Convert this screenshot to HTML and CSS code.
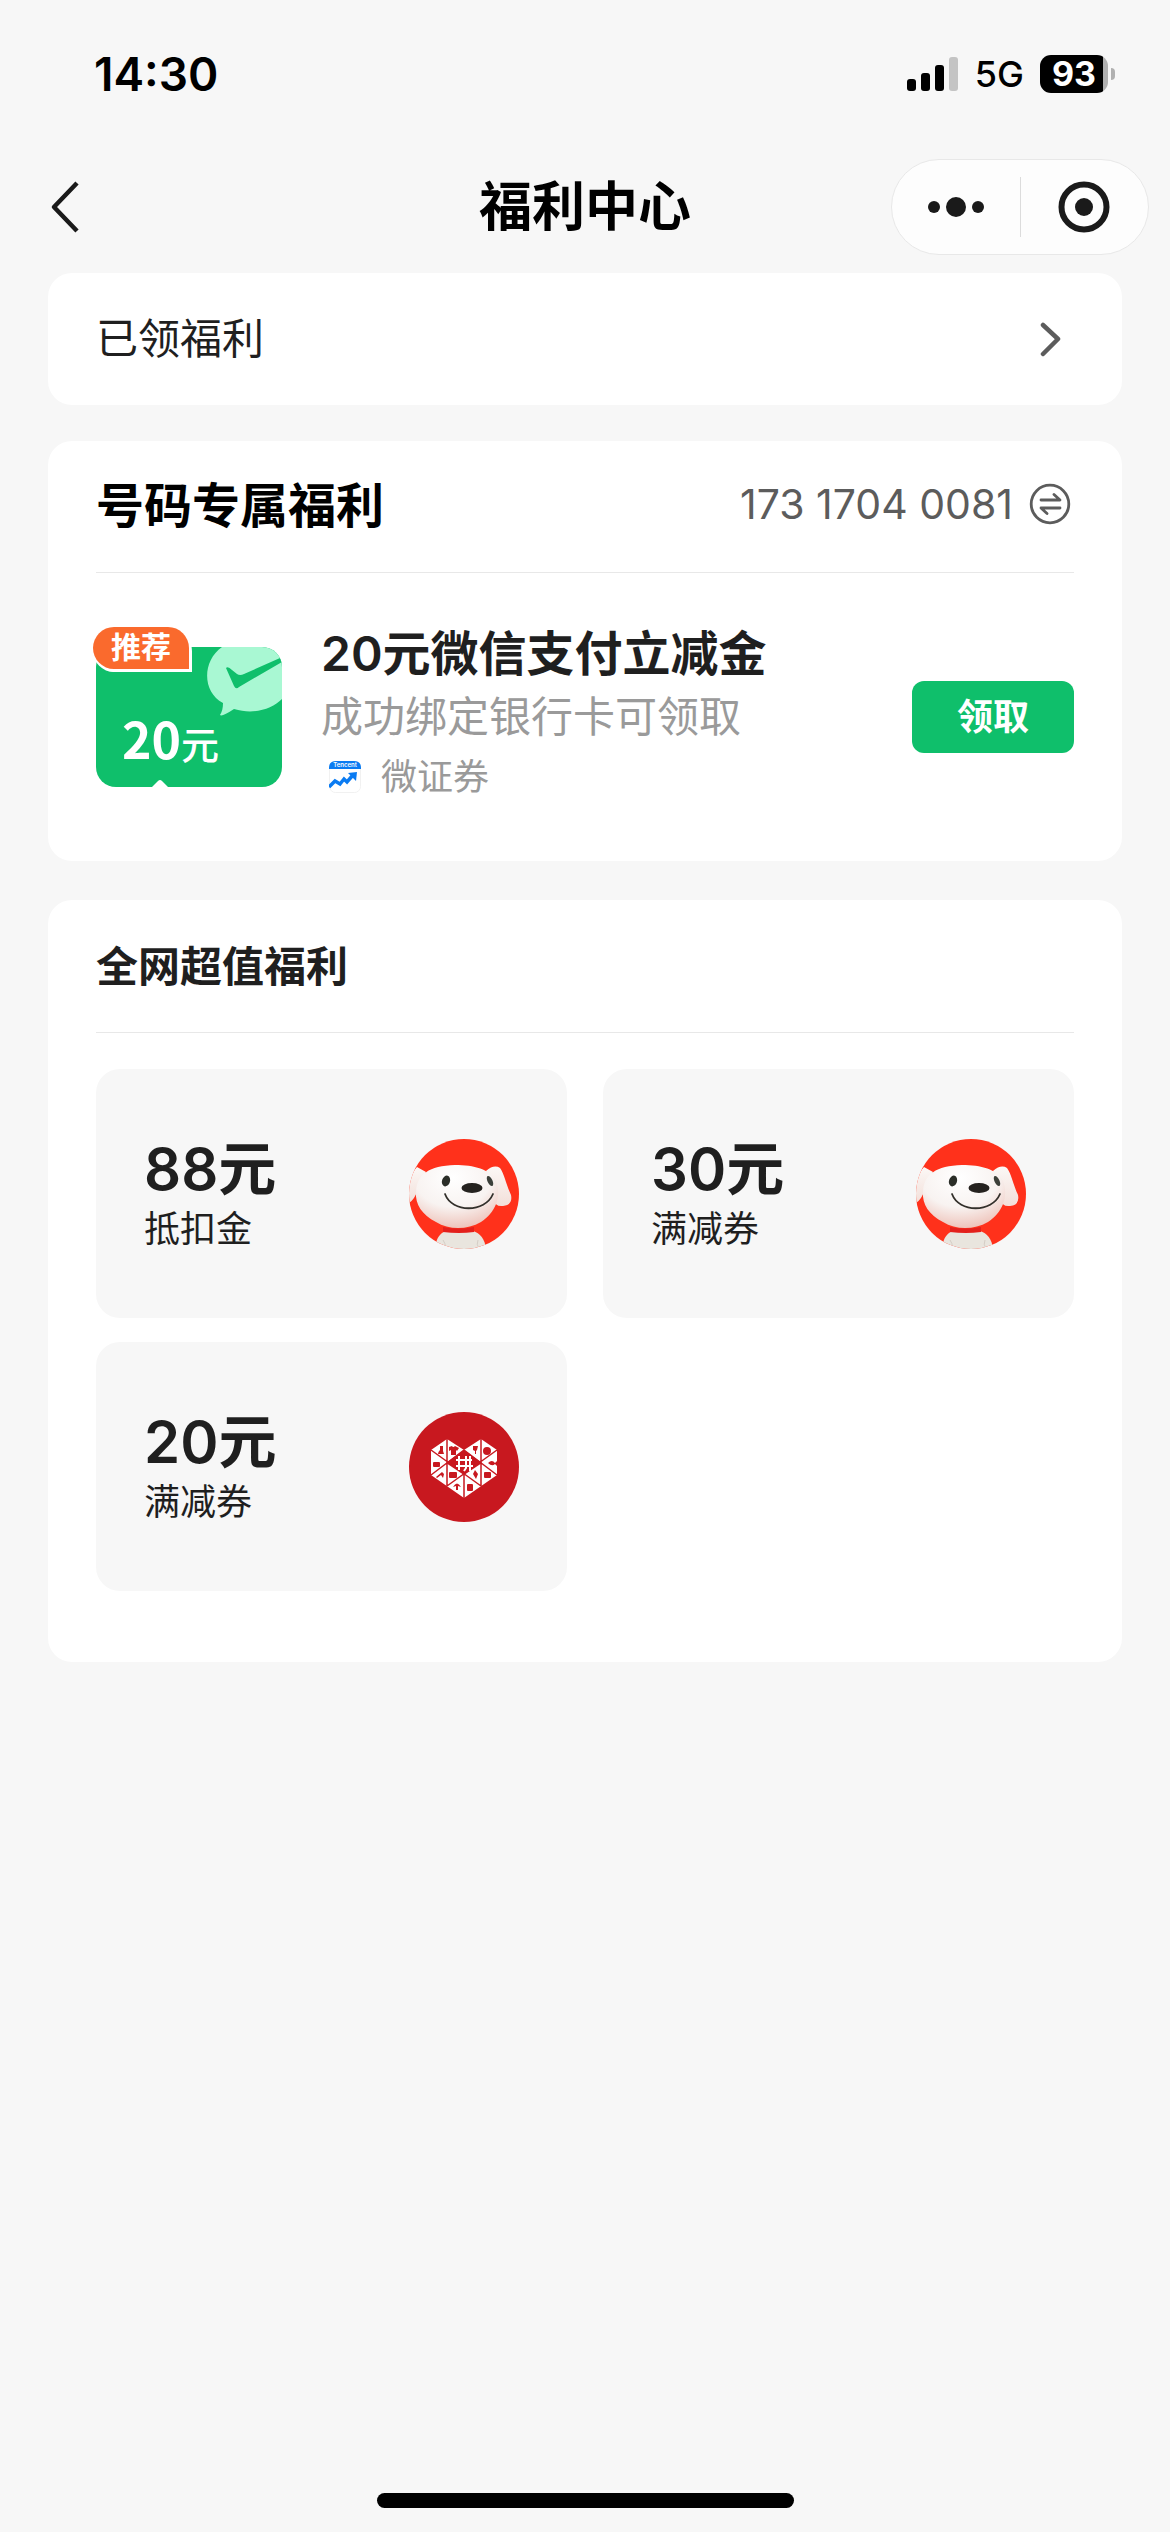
FILE: index.html
```html
<!DOCTYPE html>
<html lang="zh-CN">
<head>
<meta charset="utf-8">
<meta name="viewport" content="width=device-width, initial-scale=1">
<title>福利中心</title>
<link rel="stylesheet" href="styles.css">
</head>
<body>
<svg class="defs" width="0" height="0" aria-hidden="true">
  <defs>
    <radialGradient id="face" cx="45%" cy="20%" r="85%">
      <stop offset="0" stop-color="#ffffff"/>
      <stop offset="0.55" stop-color="#f8f3f1"/>
      <stop offset="1" stop-color="#edbdb3"/>
    </radialGradient>
    <linearGradient id="ear" x1="0" y1="0" x2="0" y2="1">
      <stop offset="0" stop-color="#fbf8f6"/>
      <stop offset="1" stop-color="#f3dfd9"/>
    </linearGradient>
    <clipPath id="disc"><circle cx="55" cy="55" r="55"/></clipPath>
    <symbol id="dog" viewBox="0 0 110 110">
      <g clip-path="url(#disc)">
        <rect width="110" height="110" fill="#ff311b"/>
        <path d="M26 110C27 98 32 93 38 92H64C71 94 76 100 77 110Z" fill="#e9e5de"/>
        <path d="M17 33L8 28Q2 34 0 45V64Q6 60 9 50Z" fill="url(#ear)"/>
        <path d="M77 32Q85 25 91 29C95 34 97 45 102 56Q104 66 94 67Q86 68 84 60Z" fill="url(#ear)"/>
        <path d="M7 53C8 35 20 27 46 26C65 26 81 30 87 42C93 58 86 74 72 83C58 91 40 91 27 83C13 76 6 65 7 53Z" fill="url(#face)"/>
        <path d="M34 88Q49 91 65 88V93Q50 95 34 93Z" fill="#e3201c"/>
        <ellipse cx="37" cy="42" rx="4" ry="5.500" transform="rotate(18 37 42)" fill="#2b2e28"/>
        <ellipse cx="81" cy="42" rx="2.500" ry="5.500" transform="rotate(-25 81 42)" fill="#3c403a"/>
        <ellipse cx="63" cy="49" rx="10.500" ry="5" fill="#25221f"/>
        <path d="M36 55C43 74 76 74 84 55" fill="none" stroke="#33302b" stroke-width="1.800" stroke-linecap="round"/>
        <path d="M34 101Q37 104 36 110M69 101Q67 105 70 110" fill="none" stroke="#d4cdc5"/>
      </g>
    </symbol>
  </defs>
</svg>

<div class="page">
  <div class="status">
    <span class="time">14:30</span>
    <div class="status-right">
      <svg class="signal" width="52" height="34" viewBox="0 0 52 34" aria-hidden="true">
        <rect x="0" y="22" width="9" height="12" rx="3"/>
        <rect x="14" y="16" width="9" height="18" rx="3"/>
        <rect x="28" y="8" width="9" height="26" rx="3"/>
        <rect x="42" y="0" width="9" height="34" rx="3" fill="#c4c4c4"/>
      </svg>
      <span class="network">5G</span>
      <div class="battery"><span class="level">93</span></div>
    </div>
  </div>

  <header class="navbar">
    <button class="back" type="button" aria-label="返回">
      <svg width="30" height="54" viewBox="0 0 30 54"><path d="M27 3L4 27L27 51" fill="none" stroke="#1a1a1a" stroke-width="4.500" stroke-linejoin="round"/></svg>
    </button>
    <h1 class="title">福利中心</h1>
    <div class="capsule">
      <button class="capsule-btn" type="button" aria-label="更多">
        <svg width="60" height="24" viewBox="0 0 60 24" fill="#1a1a1a"><circle cx="8" cy="12" r="6"/><circle cx="30" cy="12" r="10"/><circle cx="52" cy="12" r="6"/></svg>
      </button>
      <span class="capsule-line"></span>
      <button class="capsule-btn" type="button" aria-label="关闭">
        <svg width="52" height="52" viewBox="0 0 52 52"><circle cx="26" cy="26" r="22.500" fill="none" stroke="#1a1a1a" stroke-width="6"/><circle cx="26" cy="26" r="9" fill="#1a1a1a"/></svg>
      </button>
    </div>
  </header>

  <main class="content">
    <a class="card received" href="#received">
      <span>已领福利</span>
      <svg width="24" height="36" viewBox="0 0 24 36" aria-hidden="true"><path d="M5 4L20 18L5 33" fill="none" stroke="#5c5c5c" stroke-width="4.500" stroke-linecap="round" stroke-linejoin="round"/></svg>
    </a>

    <section class="card exclusive">
      <div class="card-head">
        <h2 class="heading-lg">号码专属福利</h2>
        <button class="phone" type="button">
          <span>173 1704 0081</span>
          <svg width="42" height="42" viewBox="0 0 42 42" fill="none" stroke="#5c5c5c" stroke-width="2.800" stroke-linecap="round" stroke-linejoin="round" aria-hidden="true"><circle cx="21" cy="21" r="18.800"/><path d="M12 17H31L25 11.500M31 25H12L18 30.500"/></svg>
        </button>
      </div>
      <div class="offer">
        <div class="coupon">
          <svg width="186" height="140" viewBox="0 0 186 140" aria-hidden="true">
            <defs><clipPath id="ticket"><rect width="186" height="140" rx="20"/></clipPath></defs>
            <g clip-path="url(#ticket)">
              <rect width="186" height="140" fill="#0fbf6b"/>
              <path d="M126 0C106 14 106 45 127 56C127 61 126 65 124 68Q126 70 138 62C158 68 176 62 186 52V0Z" fill="#a9f8d3"/>
              <path d="M130 21Q132 19 136 23L141 27Q144 29 148 27L184 11L186 15L143 40Q140 43 138 39Z" fill="#0fbf6b"/>
              <path d="M56 140L62 134Q64 132 66 134L72 140Z" fill="#fff"/>
            </g>
          </svg>
          <span class="coupon-value">20<span class="coupon-unit">元</span></span>
          <span class="tag">推荐</span>
        </div>
        <div class="offer-text">
          <h3 class="offer-title">20元微信支付立减金</h3>
          <p class="offer-desc">成功绑定银行卡可领取</p>
          <p class="brand">
            <svg width="32" height="32" viewBox="0 0 32 32" aria-hidden="true">
              <rect x="0.500" y="0.500" width="31" height="31" rx="6" fill="#fff" stroke="#f1f1f1"/>
              <path d="M0 8V7Q0 0 7 0H25Q32 0 32 7V8Z" fill="#0a7bf2"/>
              <text class="brand-name" x="16" y="6" text-anchor="middle">Tencent</text>
              <path d="M0 26L6 20L11 23L15 18L18 21L24 14" fill="none" stroke="#0a7bf2" stroke-width="3.500"/>
              <path d="M19 12L28 11L27 20Z" fill="#0a7bf2"/>
            </svg>
            <span>微证券</span>
          </p>
        </div>
        <button class="claim" type="button">领取</button>
      </div>
    </section>

    <section class="card deals">
      <div class="card-head">
        <h2 class="heading-md">全网超值福利</h2>
      </div>
      <div class="tiles">
        <a class="tile" href="#deal-1">
          <span class="tile-text"><strong class="amount">88元</strong><span class="kind">抵扣金</span></span>
          <svg width="110" height="110" aria-hidden="true"><use href="#dog"/></svg>
        </a>
        <a class="tile" href="#deal-2">
          <span class="tile-text"><strong class="amount">30元</strong><span class="kind">满减券</span></span>
          <svg width="110" height="110" aria-hidden="true"><use href="#dog"/></svg>
        </a>
        <a class="tile" href="#deal-3">
          <span class="tile-text"><strong class="amount">20元</strong><span class="kind">满减券</span></span>
          <svg width="110" height="110" viewBox="0 0 110 110" aria-hidden="true">
            <circle cx="55" cy="55" r="55" fill="#c8181f"/>
            <path d="M22 38L38 27L55 38L72 27L88 38V63L55 86L22 63Z" fill="#fff"/>
            <path d="M38 27V74M72 27V74M55 63V86M22 38L72 74M88 38L38 74M22 63L55 38M88 63L55 38" fill="none" stroke="#c8181f" stroke-width="1.500"/>
            <path d="M55 38L73 51L55 63L37 51Z" fill="#c8181f"/>
            <g fill="#c8181f">
              <path d="M31 34H34V39L35 42H29Q29 40 31 38Z"/>
              <path d="M40 35L43 34Q44 36 46 34L50 36L48 39L47 38V43H42V38L40 39Z"/>
              <rect x="24" y="50" width="7" height="5" rx="1"/>
              <path d="M27 65L33 60L35 62L34 66L32 63L28 66Z"/>
              <rect x="40" y="60" width="8" height="6" rx="1"/>
              <path d="M44 75Q48 68 52 75L49 74V78H47V74Z"/>
              <rect x="58" y="72" width="6" height="7" rx="1"/>
              <path d="M64 34H69L68 38L67 39V42H66V39L64 38Z"/>
              <circle cx="78" cy="39" r="4"/>
              <path d="M79 51Q83 47 86 51L88 49V54L86 52Q83 55 79 51Z"/>
              <path d="M66 58L69 62L67 67L64 62Z"/>
              <rect x="75" y="60" width="7" height="6" rx="1"/>
            </g>
            <path d="M50 44V58M57 44V56L55 59M61 44V59M47 48H63M47 54H64" fill="none" stroke="#fff" stroke-width="2"/>
          </svg>
        </a>
      </div>
    </section>
  </main>
  <div class="home-indicator"></div>
</div>
</body>
</html>
```
FILE: styles.css
```css
* {
  box-sizing: border-box;
}

body {
  margin: 0;
  background: #f7f7f7;
  color: #1f1f1f;
  font-family: Inter, "Noto Sans CJK SC", sans-serif;
}

h1, h2, h3, p {
  margin: 0;
}

button {
  margin: 0;
  padding: 0;
  border: 0;
  background: none;
  color: inherit;
  font: inherit;
}

a {
  color: inherit;
  text-decoration: none;
}

svg {
  display: block;
  flex: none;
}

.defs {
  position: absolute;
}

.page {
  display: flex;
  flex-direction: column;
  min-height: 100vh;
}

.status {
  display: flex;
  align-items: center;
  justify-content: space-between;
  height: 148px;
  padding: 0 62px 0 94px;
  color: #000;
}

.time {
  font-size: 46px;
  font-weight: 600;
}

.status-right {
  display: flex;
  align-items: center;
  gap: 16px;
}

.network {
  font-size: 36px;
  font-weight: 500;
}

.battery {
  position: relative;
  display: flex;
  align-items: center;
  justify-content: center;
  width: 68px;
  height: 38px;
  border-radius: 11px;
  background: linear-gradient(to right, #000 63px, #b0b0b0 63px);
}

.battery::after {
  content: "";
  position: absolute;
  left: 71px;
  top: 13px;
  width: 4px;
  height: 12px;
  border-radius: 0 4px 4px 0;
  background: #b0b0b0;
}

.level {
  color: #fff;
  font-size: 34px;
  font-weight: 700;
  line-height: 38px;
}

.navbar {
  display: grid;
  grid-template-columns: 1fr auto 1fr;
  align-items: center;
  height: 118px;
  padding: 0 21px;
}

.title {
  color: #000;
  font-size: 53px;
  font-weight: 600;
  line-height: 72px;
}

.back {
  justify-self: start;
  padding-left: 29px;
}

.capsule {
  display: flex;
  align-items: center;
  justify-self: end;
  width: 258px;
  height: 96px;
  border: 1px solid #e8e8e8;
  border-radius: 48px;
  background: #fdfdfd;
}

.capsule-btn {
  display: flex;
  flex: 1;
  align-items: center;
  justify-content: center;
}

.capsule-line {
  width: 1px;
  height: 60px;
  background: #dcdcdc;
}

.content {
  display: flex;
  flex: 1;
  flex-direction: column;
  gap: 36px;
  padding: 7px 48px 0;
}

.card {
  padding: 0 48px;
  border-radius: 24px;
  background: #fff;
}

.received {
  display: flex;
  align-items: center;
  justify-content: space-between;
  padding-right: 60px;
  font-size: 42px;
  line-height: 132px;
}

.card-head {
  display: flex;
  align-items: center;
  justify-content: space-between;
  height: 132px;
  padding-bottom: 5px;
  border-bottom: 1px solid #e8e8e8;
}

.heading-lg {
  padding-bottom: 4px;
  color: #000;
  font-size: 48px;
  font-weight: 600;
}

.heading-md {
  font-size: 42px;
  font-weight: 600;
}

.phone {
  display: flex;
  align-items: center;
  gap: 16px;
  padding-right: 3px;
  color: #5c5c5c;
  font-size: 41px;
}

.offer {
  display: flex;
  align-items: center;
  height: 288px;
}

.coupon {
  position: relative;
  width: 186px;
  margin-right: 39px;
}

.coupon-value {
  position: absolute;
  left: 26px;
  bottom: 16px;
  color: #fff;
  font-family: "Noto Sans CJK SC", sans-serif;
  font-size: 50px;
  font-weight: 600;
  line-height: 56px;
}

.coupon-unit {
  font-size: 38px;
  font-weight: 500;
}

.tag {
  position: absolute;
  left: -3px;
  top: -20px;
  width: 96px;
  border-radius: 21px 21px 0 21px;
  background: #fa6a2d;
  box-shadow: 0 3px 0 #fff, 3px 3px 0 #fff;
  color: #fff;
  font-size: 30px;
  font-weight: 600;
  line-height: 40px;
  padding-bottom: 2px;
  text-align: center;
}

.offer-text {
  flex: 1;
  padding-bottom: 6px;
}

.offer-title {
  font-size: 48px;
  font-weight: 600;
  line-height: 66px;
}

.offer-desc {
  color: #9a9a9a;
  font-size: 42px;
  line-height: 60px;
}

.brand {
  display: flex;
  align-items: center;
  gap: 20px;
  padding-left: 8px;
  color: #9a9a9a;
  font-size: 36px;
  line-height: 60px;
}

.brand-name {
  fill: #fff;
  font-size: 6px;
  font-weight: 600;
}

.claim {
  width: 162px;
  border-radius: 12px;
  background: #0fbf6b;
  color: #fff;
  font-size: 36px;
  font-weight: 600;
  line-height: 72px;
}

.deals {
  margin-top: 3px;
  padding-bottom: 71px;
}

.deals .card-head {
  height: 133px;
}

.tiles {
  display: grid;
  grid-template-columns: 1fr 1fr;
  gap: 24px 36px;
  padding-top: 36px;
}

.tile {
  display: flex;
  align-items: center;
  justify-content: space-between;
  height: 249px;
  padding: 0 48px;
  border-radius: 24px;
  background: #f7f7f7;
}

.tile-text {
  display: flex;
  flex-direction: column;
  padding-top: 4px;
}

.amount {
  font-size: 58px;
  font-weight: 600;
  line-height: 66px;
}

.kind {
  font-size: 36px;
  line-height: 54px;
}

.home-indicator {
  align-self: center;
  width: 417px;
  height: 15px;
  margin-bottom: 24px;
  border-radius: 8px;
  background: #000;
}
```
